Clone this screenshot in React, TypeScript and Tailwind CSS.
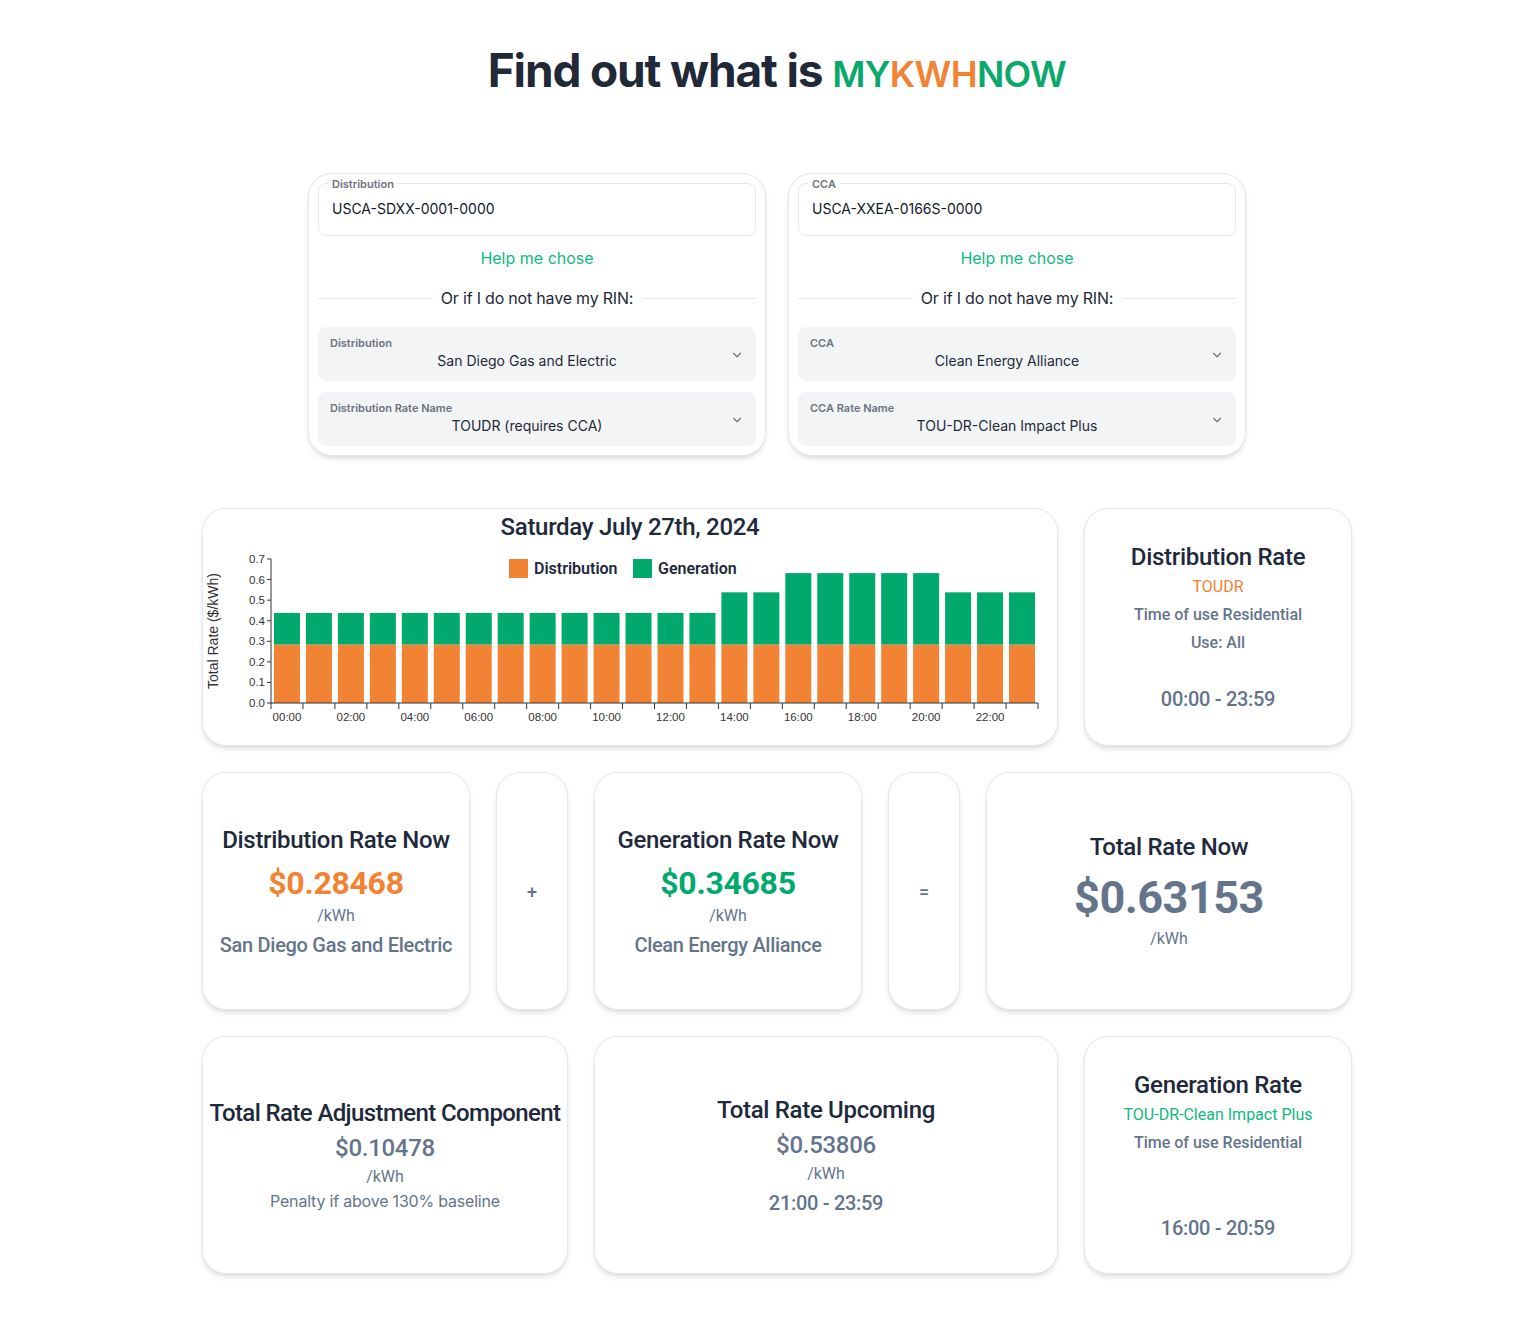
import React from "react";

const ORANGE = "#f28234";
const GREEN = "#02a96f";

const DIST = 0.28468;
const GEN = [
  0.153, 0.153, 0.153, 0.153, 0.153, 0.153, 0.153, 0.153, 0.153, 0.153, 0.153, 0.153, 0.153, 0.153,
  0.25338, 0.25338, 0.34685, 0.34685, 0.34685, 0.34685, 0.34685, 0.25338, 0.25338, 0.25338,
];

const barlow = "font-['Roboto',sans-serif]";
const pub = "font-['Inter',sans-serif]";

function Chevron() {
  return (
    <svg width="14" height="14" viewBox="0 0 24 24" fill="none" stroke="#6b7280" strokeWidth="2" strokeLinecap="round" strokeLinejoin="round">
      <path d="M6 9l6 6 6-6" />
    </svg>
  );
}

function Select({ label, value }: { label: string; value: string }) {
  return (
    <div className="relative h-[54px] rounded-lg bg-[#f3f4f6] px-3 pt-[8px]">
      <div className="text-[11px] font-semibold leading-4 text-[#6b7280]">{label}</div>
      <div className="pr-5 text-center text-[14px] leading-5 text-[#1f2937]">{value}</div>
      <div className="absolute right-[12px] top-[21px]">
        <Chevron />
      </div>
    </div>
  );
}

function RinCard({ legend, rin, sel1, val1, sel2, val2 }: { legend: string; rin: string; sel1: string; val1: string; sel2: string; val2: string }) {
  return (
    <div className={`w-[458px] rounded-3xl border border-[#e5e7eb] bg-white p-[9px] shadow-md ${pub}`}>
      <div className="relative h-[53px] rounded-lg border border-[#e5e7eb] px-[13px] pt-[15px]">
        <span className="absolute -top-[8px] left-[9px] bg-white px-1 text-[11px] font-semibold leading-4 text-[#6b7280]">{legend}</span>
        <div className="text-[14px] leading-5 text-[#111827]">{rin}</div>
      </div>
      <div className="mt-[10px] text-center text-[16px] leading-6 text-[#10b981]">Help me chose</div>
      <div className="mt-4 flex items-center gap-[10px]">
        <div className="h-px flex-1 bg-[#e5e7eb]" />
        <span className="text-[16px] leading-6 tracking-[-0.2px] text-[#1f2937]">Or if I do not have my RIN:</span>
        <div className="h-px flex-1 bg-[#e5e7eb]" />
      </div>
      <div className="mt-[17px] flex flex-col gap-[11px]">
        <Select label={sel1} value={val1} />
        <Select label={sel2} value={val2} />
      </div>
    </div>
  );
}

function Chart() {
  const x0 = 68;
  const x1 = 835;
  const yAxis = 160;
  const k = 205.7;
  const band = (x1 - x0) / 24;
  const bw = 26;
  const y = (v: number) => yAxis - v * k;
  return (
    <svg width="854" height="201" viewBox="0 0 854 201">
      {GEN.map((g, i) => {
        const bx = x0 + i * band + (band - bw) / 2;
        return (
          <g key={i}>
            <rect x={bx} y={y(DIST)} width={bw} height={DIST * k} fill={ORANGE} />
            <rect x={bx} y={y(DIST + g)} width={bw} height={g * k} fill={GREEN} />
          </g>
        );
      })}
      <line x1={x0} y1={16} x2={x0} y2={yAxis} stroke="#333" strokeWidth="1" />
      <line x1={x0} y1={yAxis} x2={x1} y2={yAxis} stroke="#333" strokeWidth="1" />
      {[0, 0.1, 0.2, 0.3, 0.4, 0.5, 0.6, 0.7].map((v) => (
        <g key={v}>
          <line x1={x0 - 4} y1={y(v)} x2={x0} y2={y(v)} stroke="#333" />
          <text x={x0 - 6} y={y(v) + 4} textAnchor="end" fontSize="11.5" fill="#333" fontFamily="Liberation Sans, sans-serif">
            {v.toFixed(1)}
          </text>
        </g>
      ))}
      {Array.from({ length: 25 }).map((_, i) => (
        <line key={i} x1={x0 + i * band} y1={yAxis} x2={x0 + i * band} y2={yAxis + 6} stroke="#333" />
      ))}
      {Array.from({ length: 12 }).map((_, i) => (
        <text key={i} x={x0 + (i * 2 + 0.5) * band} y={178} textAnchor="middle" fontSize="11.5" fill="#333" fontFamily="Liberation Sans, sans-serif">
          {String(i * 2).padStart(2, "0")}:00
        </text>
      ))}
      <text transform="translate(15 88) rotate(-90)" textAnchor="middle" fontSize="14" fill="#333" fontFamily="Liberation Sans, sans-serif">
        Total Rate ($/kWh)
      </text>
      <rect x={306} y={16} width={19} height={19} fill={ORANGE} />
      <text x={331} y={31} fontSize="16" fontWeight="600" fill="#1e293b" fontFamily="Roboto, sans-serif">
        Distribution
      </text>
      <rect x={430} y={16} width={19} height={19} fill={GREEN} />
      <text x={455} y={31} fontSize="16" fontWeight="600" fill="#1e293b" fontFamily="Roboto, sans-serif">
        Generation
      </text>
    </svg>
  );
}

function Card({ span, children, className = "" }: { span: string; children?: React.ReactNode; className?: string }) {
  return (
    <div className={`${span} flex h-[238px] flex-col items-center justify-center rounded-3xl border border-[#e2e8f0] bg-white text-center shadow-md ${barlow} ${className}`}>
      {children}
    </div>
  );
}

const title = "whitespace-nowrap text-[24px] font-medium leading-8 tracking-[-0.3px] text-[#1e293b]";
const sub = "text-[16px] font-medium leading-7 text-[#64748b]";
const kwh = "text-[16px] leading-6 text-[#64748b]";
const time = "whitespace-nowrap text-[20px] font-medium leading-7 tracking-[-0.3px] text-[#64748b]";

export default function App() {
  return (
    <div className="min-h-[1338px] bg-white pl-10 pt-[40px]">
      <h1 className="h-[60px] text-center font-['Inter',sans-serif] text-[46px] font-bold leading-[60px] tracking-tight text-[#1f2937]">
        Find out what is{" "}
        <span className="text-[36px] font-semibold tracking-[-0.6px]">
          <span className="text-[#0aa86b]">MY</span>
          <span className="text-[#f28234]">KWH</span>
          <span className="text-[#0aa86b]">NOW</span>
        </span>
      </h1>

      <div className="mt-[73px] flex justify-center gap-[22px]">
        <RinCard
          legend="Distribution"
          rin="USCA-SDXX-0001-0000"
          sel1="Distribution"
          val1="San Diego Gas and Electric"
          sel2="Distribution Rate Name"
          val2="TOUDR (requires CCA)"
        />
        <RinCard
          legend="CCA"
          rin="USCA-XXEA-0166S-0000"
          sel1="CCA"
          val1="Clean Energy Alliance"
          sel2="CCA Rate Name"
          val2="TOU-DR-Clean Impact Plus"
        />
      </div>

      <div className="mx-auto mt-[52px] grid w-[1150px] grid-cols-12 gap-[26px]">
        <div className={`col-span-9 h-[238px] rounded-3xl border border-[#e2e8f0] bg-white shadow-md ${barlow}`}>
          <div className="pt-[2px] text-center text-[24px] font-medium leading-8 tracking-[-0.3px] text-[#1e293b]">Saturday July 27th, 2024</div>
          <Chart />
        </div>
        <Card span="col-span-3">
          <div className={title}>Distribution Rate</div>
          <div className="text-[16px] leading-7 text-[#f28234]">TOUDR</div>
          <div className={sub}>Time of use Residential</div>
          <div className={sub}>Use: All</div>
          <div className="h-7" />
          <div className={time}>00:00 - 23:59</div>
        </Card>

        <Card span="col-span-3">
          <div className={title}>Distribution Rate Now</div>
          <div className="mt-[9px] text-[32px] font-bold leading-9 tracking-[-0.3px] text-[#f28234]">$0.28468</div>
          <div className={`mt-[3px] ${kwh}`}>/kWh</div>
          <div className={`mt-[3px] ${time}`}>San Diego Gas and Electric</div>
        </Card>
        <Card span="col-span-1">
          <div className="text-[18px] font-medium text-[#64748b]">+</div>
        </Card>
        <Card span="col-span-3">
          <div className={title}>Generation Rate Now</div>
          <div className="mt-[9px] text-[32px] font-bold leading-9 tracking-[-0.3px] text-[#02a96f]">$0.34685</div>
          <div className={`mt-[3px] ${kwh}`}>/kWh</div>
          <div className={`mt-[3px] ${time}`}>Clean Energy Alliance</div>
        </Card>
        <Card span="col-span-1">
          <div className="text-[18px] font-medium text-[#64748b]">=</div>
        </Card>
        <Card span="col-span-4">
          <div className={title}>Total Rate Now</div>
          <div className="mt-[11px] text-[45px] font-bold leading-[48px] tracking-[-0.5px] text-[#64748b]">$0.63153</div>
          <div className={`mt-[5px] ${kwh}`}>/kWh</div>
        </Card>

        <Card span="col-span-4">
          <div className={`${title} tracking-[-0.6px]`}>Total Rate Adjustment Component</div>
          <div className="mt-[3px] text-[24px] font-medium leading-8 tracking-[-0.3px] text-[#64748b]">$0.10478</div>
          <div className={`mt-px ${kwh}`}>/kWh</div>
          <div className={`text-[16px] leading-6 tracking-[-0.2px] text-[#64748b] ${pub}`}>Penalty if above 130% baseline</div>
        </Card>
        <Card span="col-span-5">
          <div className={title}>Total Rate Upcoming</div>
          <div className="mt-[3px] text-[24px] font-medium leading-8 tracking-[-0.3px] text-[#64748b]">$0.53806</div>
          <div className={`mt-px ${kwh}`}>/kWh</div>
          <div className={`mt-[3px] ${time}`}>21:00 - 23:59</div>
        </Card>
        <Card span="col-span-3">
          <div className={title}>Generation Rate</div>
          <div className="text-[16px] leading-7 text-[#10b981]">TOU-DR-Clean Impact Plus</div>
          <div className={sub}>Time of use Residential</div>
          <div className="h-[57px]" />
          <div className={time}>16:00 - 20:59</div>
        </Card>
      </div>
    </div>
  );
}
